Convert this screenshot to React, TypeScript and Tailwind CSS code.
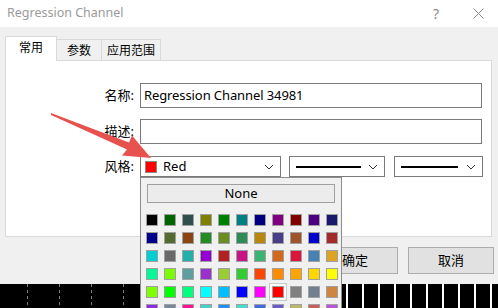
import React from 'react'

const FONT = { fontFamily: '"Noto Sans", "Noto Sans CJK SC", sans-serif' }

// MT4 colour palette, 11 per row
const PALETTE = [
  ['#000000', '#006400', '#2f4f4f', '#808000', '#008000', '#008080', '#000080', '#800080', '#800000', '#4b0082', '#191970'],
  ['#00008b', '#556b2f', '#8b4513', '#228b22', '#6b8e23', '#2e8b57', '#b8860b', '#483d8b', '#a0522d', '#0000cd', '#a52a2a'],
  ['#00ced1', '#696969', '#20b2aa', '#9400d3', '#b22222', '#c71585', '#3cb371', '#d2691e', '#dc143c', '#4682b4', '#daa520'],
  ['#00fa9a', '#7cfc00', '#5f9ea0', '#9932cc', '#9acd32', '#32cd32', '#ff4500', '#ff8c00', '#ffa500', '#ffd700', '#ffff00'],
  ['#7fff00', '#00ff00', '#00ff7f', '#00ffff', '#00bfff', '#0000ff', '#ff00ff', '#ff0000', '#808080', '#708090', '#cd853f'],
  ['#8a2be2', '#778899', '#ff1493', '#48d1cc', '#1e90ff', '#40e0d0', '#4169e1', '#6a5acd', '#bdb76b', '#cd5c5c', '#ba55d3'],
]

function Chevron() {
  return (
    <svg width="10" height="6" viewBox="0 0 10 6" className="shrink-0">
      <path d="M1 1 L5 5 L9 1" fill="none" stroke="#333" strokeWidth="1" />
    </svg>
  )
}

function LineCombo({ width, lineWidth }: { width: string; lineWidth: string }) {
  return (
    <div className={`flex h-[21px] ${width} items-center justify-between border border-[#7a7a7a] bg-white pl-[6px] pr-[6px]`}>
      <div className={`h-[2px] ${lineWidth} bg-black`} />
      <Chevron />
    </div>
  )
}

function ChartStrip() {
  const bars = [346, 362, 378, 394, 410, 426, 442, 458, 474, 490]
  return (
    <svg width="498" height="24" className="block bg-black">
      {[27, 59, 91, 123].map((x) => (
        <line key={x} x1={x + 0.5} y1="0" x2={x + 0.5} y2="24" stroke="#808080" strokeDasharray="3 3" />
      ))}
      {bars.map((x) => (
        <rect key={x} x={x} y="0" width="2" height="24" fill="#ffffff" />
      ))}
    </svg>
  )
}

function ColorPopup() {
  return (
    <div className="absolute left-[140px] top-[177px] h-[140px] w-[202px] border border-[#8c8c8c] bg-[#f0f0f0]">
      <div className="ml-[6px] mt-[6px] flex h-[19px] w-[188px] items-center justify-center border border-[#a0a0a0] bg-[#ececec] text-[13px] text-black">
        None
      </div>
      <div className="ml-[2px] mt-[8px] grid grid-cols-[repeat(11,18px)] grid-rows-[repeat(6,18px)]">
        {PALETTE.flat().map((c, i) => {
          const selected = i === 51
          return (
            <div
              key={i}
              className={`flex items-center justify-center ${selected ? 'border border-[#c8c8c8] bg-white' : ''}`}
            >
              <div className="h-[12px] w-[12px] border border-[#a0a0a0]" style={{ backgroundColor: c }} />
            </div>
          )
        })}
      </div>
    </div>
  )
}

export default function App() {
  return (
    <div className="relative h-[308px] w-[498px] overflow-hidden bg-[#f0f0f0]" style={FONT}>
      {/* Title bar */}
      <div className="flex h-[27px] items-center justify-between bg-white pl-[7px] pr-[14px]">
        <span className="text-[12.5px] text-[#9a9a9a]">Regression Channel</span>
        <div className="flex items-center gap-[34px]">
          <span className="text-[14px] text-[#888]">?</span>
          <svg width="11" height="11" viewBox="0 0 11 11">
            <path d="M0.5 0.5 L10.5 10.5 M10.5 0.5 L0.5 10.5" stroke="#888" strokeWidth="1" />
          </svg>
        </div>
      </div>

      {/* Tabs */}
      <div className="ml-[5px] mt-[9px] flex h-[24px] items-end text-[12px] text-black">
        <div className="relative z-10 -mb-px flex h-[25px] w-[52px] items-center justify-center border border-b-0 border-[#d9d9d9] bg-white pb-[2px]">
          常用
        </div>
        <div className="flex h-[21px] w-[45px] items-center justify-center border border-l-0 border-b-0 border-[#d9d9d9] bg-[#f0f0f0] pt-[2px]">
          参数
        </div>
        <div className="flex h-[21px] w-[59px] items-center justify-center border border-l-0 border-b-0 border-[#d9d9d9] bg-[#f0f0f0] pt-[2px]">
          应用范围
        </div>
      </div>

      {/* Tab panel */}
      <div className="ml-[5px] h-[177px] w-[487px] border border-[#d9d9d9] bg-white pt-[22px] text-[13px] text-black">
        <div className="flex h-[25px] items-center">
          <span className="w-[128px] text-right">名称:</span>
          <div className="ml-[6px] flex h-[25px] w-[342px] items-center border border-[#7a7a7a] pl-[3px] tracking-[-0.1px]">
            Regression Channel 34981
          </div>
        </div>
        <div className="mt-[11px] flex h-[25px] items-center">
          <span className="w-[128px] text-right">描述:</span>
          <div className="ml-[6px] h-[25px] w-[342px] border border-[#7a7a7a]" />
        </div>
        <div className="mt-[12px] flex h-[21px] items-center">
          <span className="w-[128px] text-right">风格:</span>
          <div className="ml-[6px] flex h-[21px] w-[141px] items-center justify-between border border-[#7a7a7a] bg-white pl-[4px] pr-[6px]">
            <div className="flex items-center gap-[6px]">
              <div className="h-[12px] w-[12px] border border-[#8a8a8a] bg-[#ff0000]" />
              <span>Red</span>
            </div>
            <Chevron />
          </div>
          <div className="ml-[8px]">
            <LineCombo width="w-[96px]" lineWidth="w-[65px]" />
          </div>
          <div className="ml-[9px]">
            <LineCombo width="w-[89px]" lineWidth="w-[57px]" />
          </div>
        </div>
      </div>

      {/* Buttons */}
      <div className="mt-[10px] flex h-[27px] justify-end gap-[10px] pr-[4px] text-[13px] text-black">
        <div className="flex w-[86px] items-center justify-center border border-[#adadad] bg-[#e1e1e1]">确定</div>
        <div className="flex w-[86px] items-center justify-center border border-[#adadad] bg-[#e1e1e1]">取消</div>
      </div>

      {/* Chart behind the dialog */}
      <div className="mt-[10px]">
        <ChartStrip />
      </div>

      <ColorPopup />

      {/* Annotation arrow */}
      <svg width="498" height="308" className="pointer-events-none absolute left-0 top-0">
        <polygon
          points="51,113 129,142.5 132,135.5 151,158 122,155.5 127,149.5 51,115"
          fill="#e8524e"
        />
      </svg>
    </div>
  )
}
